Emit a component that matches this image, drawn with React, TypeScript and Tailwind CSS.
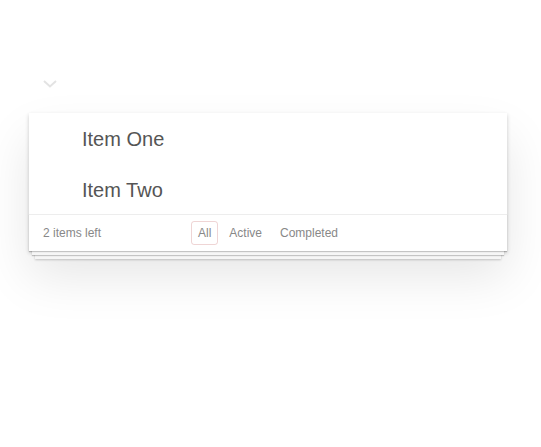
import React from "react";

const items = ["Item One", "Item Two"];
const filters = ["All", "Active", "Completed"];

export default function App() {
  return (
    <div className="min-h-[447px] w-[541px] bg-white font-['Liberation_Sans',Arial,sans-serif]">
      <div className="h-[113px] pt-[80px] pl-[43px]">
        <svg width="14" height="8" viewBox="0 0 14 8" fill="none">
          <path d="M1 1l6 5.5L13 1" stroke="#e3e3e3" strokeWidth="2" />
        </svg>
      </div>
      <div className="ml-[29px] w-[478px] bg-white shadow-[0_2px_4px_rgba(0,0,0,0.2),0_25px_50px_rgba(0,0,0,0.1)]">
        <ul>
          {items.map((item) => (
            <li key={item} className="flex h-[50.5px] items-center pl-[53px] pt-[2px] text-[20px] text-[#555]">
              {item}
            </li>
          ))}
        </ul>
        <div className="grid h-[37px] grid-cols-[1fr_auto_1fr] items-center border-t border-[#ededed] px-[14px] text-[12px] text-[#888] shadow-[0_1px_1px_rgba(0,0,0,0.2),0_7px_0_-3px_#f6f6f6,0_8px_1px_-3px_rgba(0,0,0,0.2),0_14px_0_-6px_#f6f6f6,0_15px_2px_-6px_rgba(0,0,0,0.2)]">
          <span>2 items left</span>
          <div className="flex gap-[4px]">
            {filters.map((f) => (
              <span
                key={f}
                className={
                  "rounded-[3px] border px-[6px] py-[2px] " +
                  (f === "All" ? "border-[rgba(175,47,47,0.2)]" : "border-transparent")
                }
              >
                {f}
              </span>
            ))}
          </div>
          <span />
        </div>
      </div>
    </div>
  );
}
